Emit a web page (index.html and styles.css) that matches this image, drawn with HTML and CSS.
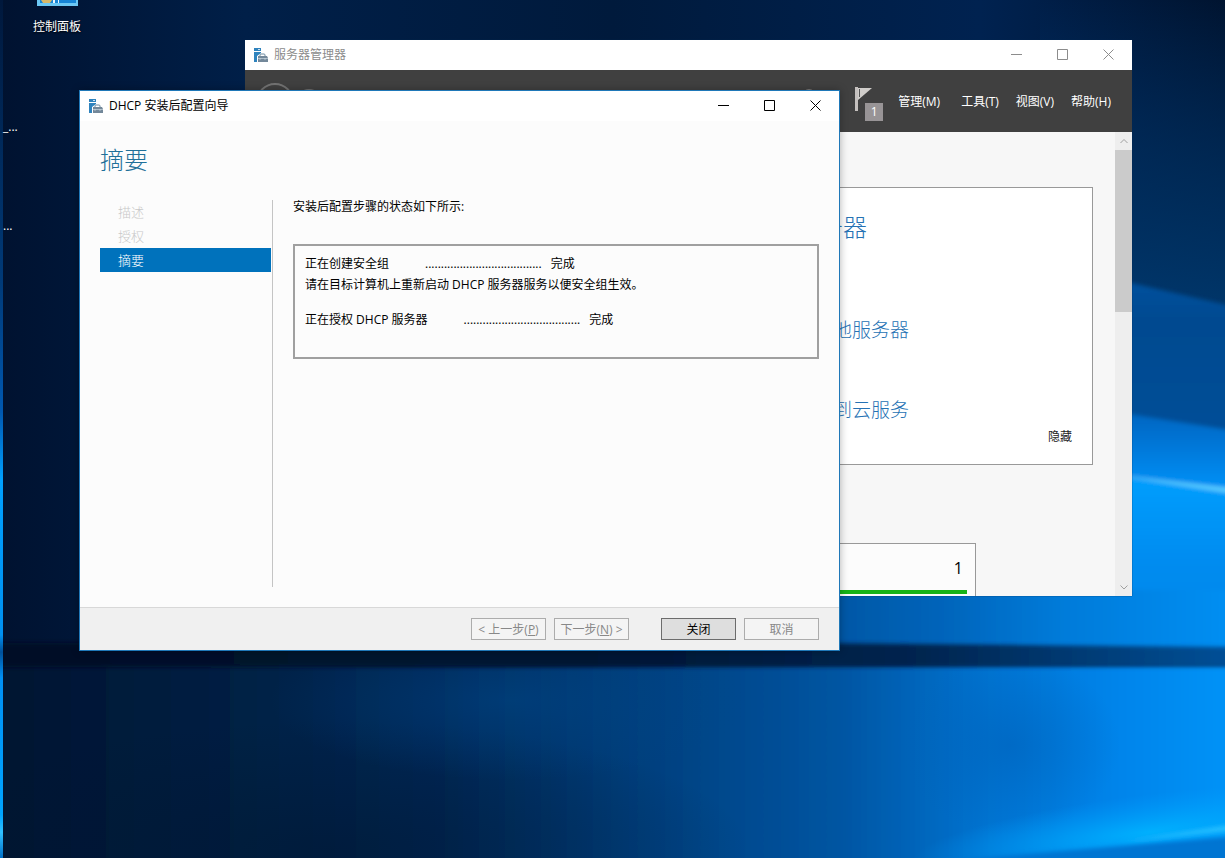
FILE: index.html
```html
<!DOCTYPE html>
<html lang="zh-CN">
<head>
<meta charset="utf-8">
<title>DHCP 安装后配置向导</title>
<link rel="stylesheet" href="styles.css">
</head>
<body>
<div class="desktop">
  <svg class="wallpaper" viewBox="0 0 1225 858" preserveAspectRatio="none" aria-hidden="true">
    <defs>
      <linearGradient id="top" x1="0" x2="1" y1="0" y2="0">
        <stop offset="0" stop-color="#001230"/><stop offset=".2" stop-color="#001f48"/><stop offset=".5" stop-color="#001a3c"/><stop offset=".8" stop-color="#002250"/><stop offset="1" stop-color="#001430"/>
      </linearGradient>
      <linearGradient id="right" x1="0" x2="0" y1="0" y2="1">
        <stop offset="0" stop-color="#003a78" stop-opacity="0"/><stop offset=".45" stop-color="#003468" stop-opacity=".7"/><stop offset="1" stop-color="#004480"/>
      </linearGradient>
      <linearGradient id="beam" x1="0" x2="0" y1="0" y2="1">
        <stop offset="0" stop-color="#0054a4"/><stop offset=".3" stop-color="#004a90"/><stop offset="1" stop-color="#00509a"/>
      </linearGradient>
      <linearGradient id="beam2" x1="0" x2="0" y1="0" y2="1">
        <stop offset="0" stop-color="#0060b8"/><stop offset=".4" stop-color="#0074d4"/><stop offset="1" stop-color="#0098ff"/>
      </linearGradient>
      <linearGradient id="glow" x1="0" x2="0" y1="0" y2="1">
        <stop offset="0" stop-color="#00a0ff"/><stop offset=".5" stop-color="#008cf0"/><stop offset="1" stop-color="#0086e6"/>
      </linearGradient>
      <linearGradient id="low" x1="0" x2="1" y1="0" y2="0">
        <stop offset="0" stop-color="#001430"/><stop offset=".2" stop-color="#002044"/><stop offset=".36" stop-color="#002856"/><stop offset=".5" stop-color="#003c78"/><stop offset=".68" stop-color="#0055a2"/><stop offset=".8" stop-color="#0074d2"/><stop offset=".9" stop-color="#0084ea"/><stop offset="1" stop-color="#0094f8"/>
      </linearGradient>
      <linearGradient id="strip" x1="0" x2="1" y1="0" y2="0">
        <stop offset="0" stop-color="#00509a"/><stop offset=".35" stop-color="#0064ba"/><stop offset=".6" stop-color="#007ad8"/><stop offset="1" stop-color="#0090f4"/>
      </linearGradient>
      <linearGradient id="bar" x1="0" x2="1" y1="0" y2="0">
        <stop offset="0" stop-color="#000f26"/><stop offset=".5" stop-color="#001634"/><stop offset=".75" stop-color="#002550"/><stop offset="1" stop-color="#005098"/>
      </linearGradient>
      <linearGradient id="edge" x1="0" x2="0" y1="0" y2="1">
        <stop offset="0" stop-color="#00183c"/><stop offset=".33" stop-color="#003a78"/><stop offset=".48" stop-color="#0058b0"/><stop offset=".56" stop-color="#00a0ff"/><stop offset=".74" stop-color="#0090f0"/><stop offset=".76" stop-color="#00509a"/><stop offset=".79" stop-color="#0090f4"/><stop offset=".95" stop-color="#00a4ff"/><stop offset=".97" stop-color="#30c0ff"/><stop offset="1" stop-color="#0070c8"/>
      </linearGradient>
      <radialGradient id="dark"><stop offset="0" stop-color="#00152e" stop-opacity=".5"/><stop offset="1" stop-color="#00152e" stop-opacity="0"/></radialGradient>
      <radialGradient id="lit"><stop offset="0" stop-color="#00488a" stop-opacity=".5"/><stop offset="1" stop-color="#00488a" stop-opacity="0"/></radialGradient>
      <radialGradient id="smoke"><stop offset="0" stop-color="#0060b8" stop-opacity=".55"/><stop offset="1" stop-color="#0060b8" stop-opacity="0"/></radialGradient>
      <radialGradient id="shine"><stop offset="0" stop-color="#00b4ff" stop-opacity=".9"/><stop offset="1" stop-color="#00a0ff" stop-opacity="0"/></radialGradient>
      <filter id="soft" x="-10%" y="-30%" width="120%" height="160%"><feGaussianBlur stdDeviation="2"/></filter>
    </defs>
    <rect width="1225" height="858" fill="url(#top)"/>
    <rect x="1040" width="185" height="430" fill="url(#right)"/>
    <g filter="url(#soft)">
      <path d="M1040 262 1240 308V460H1040Z" fill="url(#beam)"/>
      <path d="M1040 400 1240 432V500H1040Z" fill="url(#beam2)"/>
      <path d="M1040 468 1240 492V655H1040Z" fill="url(#glow)"/>
      <path d="M1100 473 1240 489V495Z" fill="#58ccff"/>
      <path d="M780 590H1240V650H780Z" fill="url(#strip)"/>
      <rect x="-10" y="664" width="1250" height="210" fill="url(#low)"/>
    </g>
    <clipPath id="floor"><rect y="668" width="1225" height="190"/></clipPath>
    <g clip-path="url(#floor)">
      <ellipse cx="330" cy="850" rx="420" ry="130" fill="url(#dark)"/>
      <ellipse cx="510" cy="700" rx="240" ry="80" fill="url(#lit)"/>
      <ellipse cx="1010" cy="745" rx="110" ry="90" fill="url(#smoke)"/>
      <ellipse cx="1150" cy="832" rx="240" ry="38" fill="url(#shine)" transform="rotate(-7 1150 832)"/>
    </g>
    <g filter="url(#soft)">
      <path d="M-10 643H800L1235 647V667H-10Z" fill="url(#bar)"/>
      <path d="M930 862Q1100 848 1240 836V870H930Z" fill="#0074d2"/>
      <path d="M1120 842 1235 824V830Z" fill="#28c0ff"/>
    </g>
    <rect width="3" height="858" fill="url(#edge)"/>
  </svg>

  <a class="shortcut" href="#">
    <svg width="41" height="7" viewBox="0 0 41 7" aria-hidden="true">
      <path d="M0 0H41V6H0Z" fill="#6cc8f4"/><path d="M3 0H39V3H3Z" fill="#1685d6"/><path d="M4 0H15L13 3H6Z" fill="#d8b868"/><path d="M16 0H18V3H16ZM21 0H22V3H21Z" fill="#e8f6ff"/>
    </svg>
    <span>控制面板</span>
  </a>
  <span class="clipped-label first">_...</span>
  <span class="clipped-label second">...</span>

  <section class="window manager" aria-label="服务器管理器">
    <header class="titlebar">
      <svg class="app-icon" viewBox="0 0 14 14" aria-hidden="true"><path d="M0 0H7V3H0ZM0 4H7V5L3 8V14H0Z" fill="#2f83bd"/><path d="M4 1H6V2H4Z" fill="#cfe4f3"/><path d="M6 8V7Q6 6 7 6H10Q11 6 11 7V8" fill="none" stroke="#6c8aa0"/><path d="M4 8H13L14 10V14H4Z" fill="#73889a"/><path d="M4 10.500H14M6 10V12M11 10V12" stroke="#d7e2ea" stroke-width=".6"/></svg>
      <span class="caption">服务器管理器</span>
      <div class="controls">
        <button aria-label="最小化"><svg viewBox="0 0 11 11"><path d="M0 5.500H11"/></svg></button>
        <button aria-label="最大化"><svg viewBox="0 0 11 11"><path d="M.5 .5H10.500V10.500H.5Z"/></svg></button>
        <button aria-label="关闭窗口"><svg viewBox="0 0 11 11"><path d="M.5 .5 10.500 10.500M10.500 .5 .5 10.500"/></svg></button>
      </div>
    </header>
    <nav class="toolbar">
      <svg class="history" viewBox="0 0 80 62" aria-hidden="true"><g fill="none" stroke="#737373" stroke-width="2"><circle cx="30" cy="31" r="18"/><circle cx="64" cy="32" r="13"/></g></svg>
      <svg class="refresh" viewBox="0 0 26 26" aria-hidden="true"><circle cx="13" cy="13" r="11" fill="none" stroke="#bdb9b5" stroke-width="3"/></svg>
      <button class="flag" aria-label="通知">
        <svg viewBox="0 0 28 34" aria-hidden="true"><path d="M0 0H3V24H0Z" fill="#c4c0be"/><path d="M3 1H17L3 13Z" fill="#d0cdca"/><path d="M4.500 2V10" stroke="#555"/></svg>
        <span class="badge">1</span>
      </button>
      <a class="manage" href="#">管理(M)</a><a href="#">工具(T)</a><a href="#">视图(V)</a><a href="#">帮助(H)</a>
    </nav>
    <div class="dashboard">
      <main class="content">
        <section class="welcome">
          <h2>配置此本地服务器</h2>
          <ul>
            <li><a href="#">添加角色和功能</a></li>
            <li><a href="#">添加要管理的其他服务器</a></li>
            <li><a href="#">创建服务器组</a></li>
            <li><a href="#">将此服务器连接到云服务</a></li>
          </ul>
          <button class="hide">隐藏</button>
        </section>
        <section class="tile"><span>1</span></section>
      </main>
      <div class="scrollbar" aria-hidden="true">
        <svg viewBox="0 0 17 18"><path d="M5.500 11 9 7.500 12.500 11"/></svg>
        <div class="thumb"></div>
        <svg viewBox="0 0 17 18"><path d="M5.500 7.500 9 11 12.500 7.500"/></svg>
      </div>
    </div>
  </section>

  <section class="window wizard" role="dialog" aria-labelledby="wizard-title">
    <header class="titlebar">
      <svg class="app-icon" viewBox="0 0 14 14" aria-hidden="true"><path d="M0 0H7V3H0ZM0 4H7V5L3 8V14H0Z" fill="#2f83bd"/><path d="M4 1H6V2H4Z" fill="#cfe4f3"/><path d="M6 8V7Q6 6 7 6H10Q11 6 11 7V8" fill="none" stroke="#6c8aa0"/><path d="M4 8H13L14 10V14H4Z" fill="#73889a"/><path d="M4 10.500H14M6 10V12M11 10V12" stroke="#d7e2ea" stroke-width=".6"/></svg>
      <span class="caption" id="wizard-title">DHCP 安装后配置向导</span>
      <div class="controls">
        <button aria-label="最小化"><svg viewBox="0 0 11 11"><path d="M0 5.500H11"/></svg></button>
        <button aria-label="最大化"><svg viewBox="0 0 11 11"><path d="M.5 .5H10.500V10.500H.5Z"/></svg></button>
        <button aria-label="关闭窗口"><svg viewBox="0 0 11 11"><path d="M.5 .5 10.500 10.500M10.500 .5 .5 10.500"/></svg></button>
      </div>
    </header>
    <h1>摘要</h1>
    <div class="wizard-body">
      <ol class="steps">
        <li>描述</li><li>授权</li><li class="current" aria-current="step">摘要</li>
      </ol>
      <div class="summary">
        <p>安装后配置步骤的状态如下所示:</p>
        <div class="results">
          <div class="result"><span>正在创建安全组</span><span class="outcome"><span>.....................................</span><span>完成</span></span></div>
          <p class="note">请在目标计算机上重新启动 DHCP 服务器服务以便安全组生效。</p>
          <div class="result"><span>正在授权 DHCP 服务器</span><span class="outcome"><span>.....................................</span><span>完成</span></span></div>
        </div>
      </div>
    </div>
    <footer class="actions">
      <button disabled>&lt; 上一步(<u>P</u>)</button>
      <button disabled>下一步(<u>N</u>) &gt;</button>
      <button class="primary">关闭</button>
      <button disabled>取消</button>
    </footer>
  </section>
</div>
</body>
</html>
```

FILE: styles.css
```css
* { box-sizing: border-box; }

body {
  margin: 0;
  font: 12px/20px "Open Sans", "Noto Sans CJK SC", sans-serif;
  color: #000;
}

button { font: inherit; color: inherit; }
a { color: inherit; text-decoration: none; }
h1, h2, p, ul, ol { margin: 0; padding: 0; font-weight: 300; }
p { font-weight: 400; }
ul, ol { list-style: none; }

.desktop {
  position: relative;
  height: 100vh;
  min-height: 640px;
  min-width: 900px;
  overflow: hidden;
  background: #001a3c;
}

.wallpaper { position: absolute; width: 100%; height: 100%; }

.shortcut {
  position: absolute;
  top: 0;
  left: 20px;
  width: 74px;
  display: flex;
  flex-direction: column;
  align-items: center;
  gap: 10px;
  color: #fff;
  text-shadow: 0 1px 2px #000;
}

.clipped-label { position: absolute; left: 3px; color: #fff; }
.first { top: 117px; }
.second { top: 216px; }

/* Windows */
.window { position: absolute; display: flex; flex-direction: column; }

.manager {
  top: 40px;
  right: 93px;
  bottom: 262px;
  left: 245px;
  background: #f7f7f7;
  box-shadow: 0 0 1px #002a55;
}

.wizard {
  top: 90px;
  right: 385px;
  bottom: 207px;
  left: 79px;
  border: 1px solid #1f78b8;
  background: #fcfcfc;
  box-shadow: 0 0 8px rgba(0, 0, 0, .3);
}

.titlebar {
  flex: none;
  height: 30px;
  display: flex;
  align-items: center;
  padding-left: 9px;
  background: #fff;
}

.app-icon { width: 14px; height: 14px; margin-right: 6px; }
.manager .caption { color: #8c8c8c; }
.controls { display: flex; height: 100%; margin-left: auto; }

.controls button {
  width: 46px;
  display: grid;
  place-items: center;
  padding: 0 1px 2px 0;
  border: 0;
  background: none;
  color: #000;
}

.manager .controls button { color: #8c8c8c; }
.controls svg { width: 11px; height: 11px; fill: none; stroke: currentColor; }

/* Server manager */
.toolbar {
  flex: none;
  height: 62px;
  display: flex;
  align-items: center;
  gap: 17px;
  padding: 2px 21px 0 0;
  background: #404040;
  color: #fff;
}

.history { width: 80px; height: 62px; }
.refresh { width: 26px; height: 26px; margin: 0 16px 0 auto; }

.flag {
  position: relative;
  width: 28px;
  height: 34px;
  padding: 0;
  border: 0;
  margin: 4px -2px 0 0;
  background: none;
}

.manage { margin-right: 4px; }
.flag svg { display: block; width: 28px; height: 34px; }

.badge {
  position: absolute;
  right: 0;
  bottom: 0;
  width: 18px;
  height: 18px;
  background: #989496;
  color: #fff;
  line-height: 18px;
}

.dashboard { flex: 1; min-height: 0; display: flex; }

.content {
  flex: 1;
  overflow: hidden;
  padding: 55px 22px 0 40px;
}

.welcome {
  display: flex;
  flex-direction: column;
  height: 278px;
  padding: 19px 20px 17px 389px;
  border: 1px solid #999;
  background: #fff;
  color: #2672b4;
}

.welcome h2 { font-size: 24px; line-height: 40px; }
.welcome ul { margin: 23px 0 0 25px; font-size: 19px; line-height: 40px; font-weight: 300; }

.hide {
  margin: -3px 0 0 auto;
  padding: 0;
  border: 0;
  background: none;
  color: #222;
}

.tile {
  width: 291px;
  height: 100px;
  margin: 78px 0 0 400px;
  padding: 14px 8px 0 0;
  border: 1px solid #999;
  background: #fcfcfc;
  font-size: 16px;
  text-align: right;
}

.tile span { display: block; padding: 0 4px 12px; border-bottom: 4px solid #17b317; }

.scrollbar { width: 17px; display: flex; flex-direction: column; background: #eee; }
.scrollbar svg { width: 17px; height: 18px; fill: none; stroke: #a0a0a0; stroke-width: 1; }
.thumb { height: 162px; margin-bottom: auto; background: #cbcbcb; }

/* Configuration wizard */
.wizard h1 {
  padding: 19px 20px 20px;
  font-size: 24px;
  line-height: 40px;
  color: #1f7099;
}

.wizard-body { flex: 1; display: flex; min-height: 0; padding: 0 20px 20px; }

.steps {
  width: 173px;
  padding-right: 1px;
  border-right: 1px solid #c4c4c4;
  font-size: 13px;
  line-height: 24px;
  color: #c8c8c8;
}

.steps li { padding-left: 18px; }
.steps .current { background: #0072bc; color: #fff; }

.summary { flex: 1; padding: 0 0 0 20px; line-height: 14px; }

.results {
  height: 115px;
  margin-top: 30px;
  padding: 7px 10px;
  border: 2px solid #a0a0a0;
  line-height: 21px;
}

.result { display: flex; gap: 36px; }
.outcome { display: flex; gap: 9px; }
.note { margin-bottom: 14px; }

.actions {
  height: 43px;
  display: flex;
  justify-content: flex-end;
  gap: 8px;
  padding: 10px 20px;
  border-top: 1px solid #d8d8d8;
  background: #f0f0f0;
}

.actions button {
  width: 75px;
  height: 22px;
  padding: 1px 0 0;
  border: 1px solid #acacac;
  background: #f4f4f4;
  line-height: 19px;
  color: #888;
  white-space: nowrap;
}

.actions .primary { margin-left: 24px; border-color: #6c6c6c; background: #dedede; color: #000; }
```
